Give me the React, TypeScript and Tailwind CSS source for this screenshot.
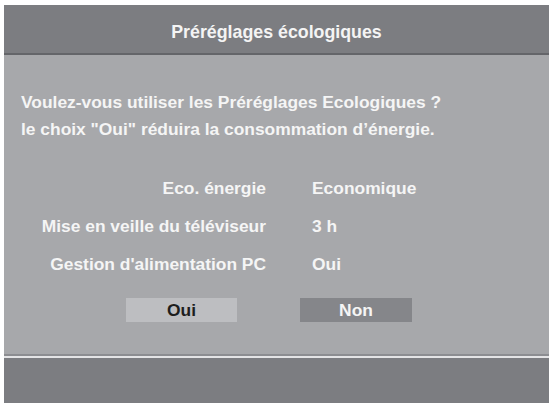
import React from "react"

const rows = [
  { label: "Eco. énergie", value: "Economique" },
  { label: "Mise en veille du téléviseur", value: "3 h" },
  { label: "Gestion d'alimentation PC", value: "Oui" },
]

export default function App() {
  return (
    <div className="h-[403px] w-[553px] bg-white pl-[4px] pr-[4px] pt-[5px] font-['Liberation_Sans',Arial,sans-serif] font-bold">
      <div className="flex h-full flex-col bg-[#a7a8ab]">
        {/* titre */}
        <div className="flex h-[50px] items-center justify-center border-b-2 border-[#646569] bg-[#7c7d81] pt-[7px] text-[17.8px] text-[#f4f4f4]">
          Préréglages écologiques
        </div>

        {/* contenu */}
        <div className="flex flex-1 flex-col">
          <div className="pl-[17px] pt-[34px] text-[17.4px] leading-[27px] text-[#f5f5f5]">
            <p>Voulez-vous utiliser les Préréglages Ecologiques ?</p>
            <p>le choix "Oui" réduira la consommation d’énergie.</p>
          </div>

          <div className="mt-[34px] flex flex-col gap-[16px] text-[17.4px] leading-[22px] text-[#f5f5f5]">
            {rows.map((r) => (
              <div key={r.label} className="flex">
                <span className="w-[262px] text-right">{r.label}</span>
                <span className="ml-[46px]">{r.value}</span>
              </div>
            ))}
          </div>

          <div className="mt-[23px] flex text-[17.4px]">
            <div className="ml-[122px] flex h-[24px] w-[111px] items-center justify-center bg-[#bdbec1] text-[#1e1e1e]">
              Oui
            </div>
            <div className="ml-[63px] flex h-[24px] w-[112px] items-center justify-center bg-[#85868a] text-[#f5f5f5]">
              Non
            </div>
          </div>
        </div>

        {/* pied */}
        <div className="h-[4px] border-t-2 border-[#8c8d91] bg-[#e4e4e6]" />
        <div className="h-[45px] bg-[#7c7d81]" />
      </div>
    </div>
  )
}
